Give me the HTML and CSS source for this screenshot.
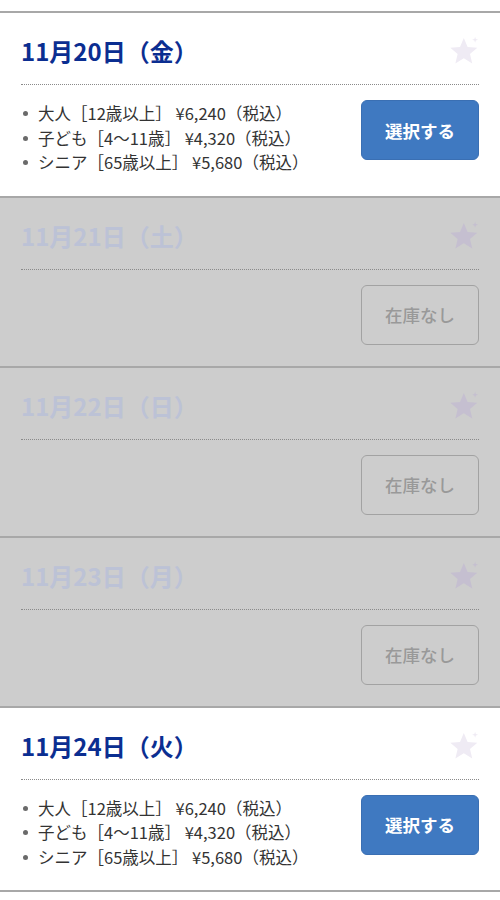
FILE: index.html
```html
<!DOCTYPE html>
<html lang="ja">
<head>
  <meta charset="UTF-8">
  <title>日程を選択</title>
  <link rel="stylesheet" href="styles.css">
</head>
<body>

  <div class="schedule">

    <section class="day">
      <div class="day-head">
        <h2 class="day-title">11月20日（金）</h2>
        <svg class="fav" viewBox="0 0 32 32" width="38" height="38">
          <path d="M15 5 L18.2 12.6 L26.4 13.2 L20.2 18.5 L22.1 26.5 L15 22.2 L7.9 26.5 L9.8 18.5 L3.6 13.2 L11.8 12.6 Z"/>
          <path d="M24.5 4 L25.1 5.9 L27 6.5 L25.1 7.1 L24.5 9 L23.9 7.1 L22 6.5 L23.9 5.9 Z"/>
        </svg>
      </div>
      <div class="day-body">
        <ul class="prices">
          <li>大人［12歳以上］ ¥6,240（税込）</li>
          <li>子ども［4〜11歳］ ¥4,320（税込）</li>
          <li>シニア［65歳以上］ ¥5,680（税込）</li>
        </ul>
        <button class="btn btn-select">選択する</button>
      </div>
    </section>

    <section class="day soldout">
      <div class="day-head">
        <h2 class="day-title">11月21日（土）</h2>
        <svg class="fav" viewBox="0 0 32 32" width="38" height="38">
          <path d="M15 5 L18.2 12.6 L26.4 13.2 L20.2 18.5 L22.1 26.5 L15 22.2 L7.9 26.5 L9.8 18.5 L3.6 13.2 L11.8 12.6 Z"/>
          <path d="M24.5 4 L25.1 5.9 L27 6.5 L25.1 7.1 L24.5 9 L23.9 7.1 L22 6.5 L23.9 5.9 Z"/>
        </svg>
      </div>
      <div class="day-body">
        <div class="prices"></div>
        <button class="btn btn-none" disabled>在庫なし</button>
      </div>
    </section>

    <section class="day soldout">
      <div class="day-head">
        <h2 class="day-title">11月22日（日）</h2>
        <svg class="fav" viewBox="0 0 32 32" width="38" height="38">
          <path d="M15 5 L18.2 12.6 L26.4 13.2 L20.2 18.5 L22.1 26.5 L15 22.2 L7.9 26.5 L9.8 18.5 L3.6 13.2 L11.8 12.6 Z"/>
          <path d="M24.5 4 L25.1 5.9 L27 6.5 L25.1 7.1 L24.5 9 L23.9 7.1 L22 6.5 L23.9 5.9 Z"/>
        </svg>
      </div>
      <div class="day-body">
        <div class="prices"></div>
        <button class="btn btn-none" disabled>在庫なし</button>
      </div>
    </section>

    <section class="day soldout">
      <div class="day-head">
        <h2 class="day-title">11月23日（月）</h2>
        <svg class="fav" viewBox="0 0 32 32" width="38" height="38">
          <path d="M15 5 L18.2 12.6 L26.4 13.2 L20.2 18.5 L22.1 26.5 L15 22.2 L7.9 26.5 L9.8 18.5 L3.6 13.2 L11.8 12.6 Z"/>
          <path d="M24.5 4 L25.1 5.9 L27 6.5 L25.1 7.1 L24.5 9 L23.9 7.1 L22 6.5 L23.9 5.9 Z"/>
        </svg>
      </div>
      <div class="day-body">
        <div class="prices"></div>
        <button class="btn btn-none" disabled>在庫なし</button>
      </div>
    </section>

    <section class="day">
      <div class="day-head">
        <h2 class="day-title">11月24日（火）</h2>
        <svg class="fav" viewBox="0 0 32 32" width="38" height="38">
          <path d="M15 5 L18.2 12.6 L26.4 13.2 L20.2 18.5 L22.1 26.5 L15 22.2 L7.9 26.5 L9.8 18.5 L3.6 13.2 L11.8 12.6 Z"/>
          <path d="M24.5 4 L25.1 5.9 L27 6.5 L25.1 7.1 L24.5 9 L23.9 7.1 L22 6.5 L23.9 5.9 Z"/>
        </svg>
      </div>
      <div class="day-body">
        <ul class="prices">
          <li>大人［12歳以上］ ¥6,240（税込）</li>
          <li>子ども［4〜11歳］ ¥4,320（税込）</li>
          <li>シニア［65歳以上］ ¥5,680（税込）</li>
        </ul>
        <button class="btn btn-select">選択する</button>
      </div>
    </section>

  </div>

</body>
</html>
```

FILE: styles.css
```css
body {
  margin: 0;
  padding-top: 11px;
  background: #fff;
  font-family: "Noto Sans CJK JP", "Noto Sans", sans-serif;
  color: #333;
}

.schedule {
  border-top: 2px solid #a8a8a8;
}

.day {
  background: #fff;
  border-bottom: 2px solid #a8a8a8;
  padding: 0 21px 21px 21px;
}

.day-head {
  display: flex;
  justify-content: space-between;
  align-items: center;
  padding: 20px 0 15px 0;
  border-bottom: 1px dotted #8a8a8a;
}

.day-title {
  margin: 0;
  font-size: 24px;
  line-height: 36px;
  font-weight: bold;
  color: #0b2e91;
}

.fav {
  margin: -1px -5px -1px 0;
  fill: #efebf4;
}

.day-body {
  display: flex;
  justify-content: space-between;
  align-items: flex-start;
  padding-top: 15px;
}

.prices {
  list-style: none;
  margin: 1px 0 0 0;
  padding: 0;
  font-size: 16.5px;
  line-height: 24.5px;
}

.prices li {
  position: relative;
  padding-left: 17px;
}

.prices li::before {
  content: "";
  position: absolute;
  left: 2px;
  top: 10px;
  width: 5px;
  height: 5px;
  border-radius: 50%;
  background: #6a6a6a;
}

.btn {
  width: 118px;
  height: 60px;
  border-radius: 6px;
  font-family: inherit;
  font-size: 17.5px;
  padding: 0;
}

.btn-select {
  background: #3f79c1;
  border: 1px solid #3a6fb3;
  color: #fff;
  font-weight: bold;
  cursor: pointer;
}

.btn-none {
  background: transparent;
  border: 1px solid #a2a2a2;
  color: #999;
  font-weight: 500;
}

.soldout {
  background: #cdcdcd;
}

.soldout .day-title {
  color: #bcc2d6;
}

.soldout .fav {
  fill: #c5bfd0;
}
```
